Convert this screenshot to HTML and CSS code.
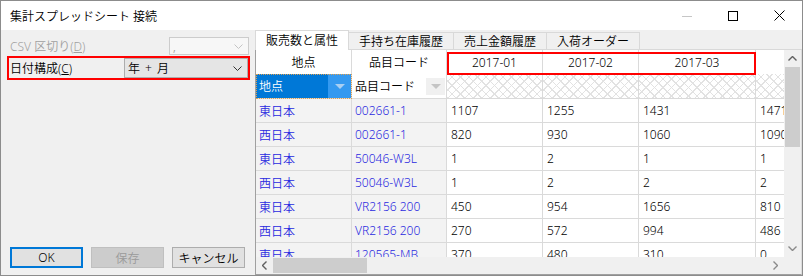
FILE: index.html
```html
<!DOCTYPE html>
<html lang="ja">
<head>
    <meta charset="UTF-8">
    <title>集計スプレッドシート 接続</title>
    <link rel="stylesheet" href="styles.css">
</head>
<body>
    <div class="window">
        <div class="titlebar">
            <span class="title">集計スプレッドシート 接続</span>
            <div class="caption-buttons">
                <span class="cap-btn"><svg width="10" height="10"><line x1="0" y1="5.5" x2="10" y2="5.5" stroke="#c6c6c6"/></svg></span>
                <span class="cap-btn"><svg width="10" height="10"><rect x="0.5" y="0.5" width="9" height="9" fill="none" stroke="#000"/></svg></span>
                <span class="cap-btn"><svg width="11" height="11"><path d="M0.5 0.5 L10.5 10.5 M10.5 0.5 L0.5 10.5" stroke="#000" stroke-width="1"/></svg></span>
            </div>
        </div>

        <div class="content">
            <div class="left">
                <div class="field-row csv-row">
                    <label class="label-disabled">CSV 区切り(<u>D</u>)</label>
                    <div class="combo combo-disabled">
                        <span>,</span>
                        <svg width="9" height="5"><polyline points="0.5,0.5 4.5,4.5 8.5,0.5" fill="none" stroke="#c4c4c4"/></svg>
                    </div>
                </div>
                <div class="field-row date-row">
                    <label class="date-label">日付構成(<u>C</u>)</label>
                    <div class="combo">
                        <span>年 + 月</span>
                        <svg width="9" height="5"><polyline points="0.5,0.5 4.5,4.5 8.5,0.5" fill="none" stroke="#333"/></svg>
                    </div>
                </div>
                <div class="buttons">
                    <button class="btn btn-default">OK</button>
                    <button class="btn" disabled>保存</button>
                    <button class="btn">キャンセル</button>
                </div>
            </div>

            <div class="right">
                <div class="tabs">
                    <span class="tab active">販売数と属性</span>
                    <span class="tab">手持ち在庫履歴</span>
                    <span class="tab">売上金額履歴</span>
                    <span class="tab">入荷オーダー</span>
                </div>
                <div class="grid-box">
                    <div class="grid-main">
                        <div class="cells">
                            <div class="row head-row">
                                <div class="cell">地点</div>
                                <div class="cell">品目コード</div>
                                <div class="cell">2017-01</div>
                                <div class="cell">2017-02</div>
                                <div class="cell">2017-03</div>
                                <div class="cell"></div>
                            </div>
                            <div class="row filter-row">
                                <div class="cell filter-active">
                                    <span class="filter-text">地点</span>
                                    <span class="filter-arrow"><i class="tri tri-blue"></i></span>
                                </div>
                                <div class="cell filter-plain">
                                    <span class="filter-text">品目コード</span>
                                    <span class="filter-arrow-box"><i class="tri"></i></span>
                                </div>
                                <div class="cell hatch"></div>
                                <div class="cell hatch"></div>
                                <div class="cell hatch"></div>
                                <div class="cell hatch"></div>
                            </div>
                            <div class="row data-row">
                                <div class="cell key">東日本</div><div class="cell key">002661-1</div>
                                <div class="cell">1107</div><div class="cell">1255</div><div class="cell">1431</div><div class="cell">1471</div>
                            </div>
                            <div class="row data-row">
                                <div class="cell key">西日本</div><div class="cell key">002661-1</div>
                                <div class="cell">820</div><div class="cell">930</div><div class="cell">1060</div><div class="cell">1090</div>
                            </div>
                            <div class="row data-row">
                                <div class="cell key">東日本</div><div class="cell key">50046-W3L</div>
                                <div class="cell">1</div><div class="cell">2</div><div class="cell">1</div><div class="cell">1</div>
                            </div>
                            <div class="row data-row">
                                <div class="cell key">西日本</div><div class="cell key">50046-W3L</div>
                                <div class="cell">1</div><div class="cell">2</div><div class="cell">2</div><div class="cell">2</div>
                            </div>
                            <div class="row data-row">
                                <div class="cell key">東日本</div><div class="cell key">VR2156 200</div>
                                <div class="cell">450</div><div class="cell">954</div><div class="cell">1656</div><div class="cell">810</div>
                            </div>
                            <div class="row data-row">
                                <div class="cell key">西日本</div><div class="cell key">VR2156 200</div>
                                <div class="cell">270</div><div class="cell">572</div><div class="cell">994</div><div class="cell">486</div>
                            </div>
                            <div class="row data-row">
                                <div class="cell key">東日本</div><div class="cell key">120565-MB</div>
                                <div class="cell">370</div><div class="cell">480</div><div class="cell">310</div><div class="cell">0</div>
                            </div>
                            <div class="highlight"></div>
                        </div>
                        <div class="vscroll">
                            <span class="sb-btn"><svg width="9" height="5"><polyline points="0.5,4.5 4.5,0.5 8.5,4.5" fill="none" stroke="#606060" stroke-width="1.4"/></svg></span>
                            <div class="vtrack"><div class="vthumb"></div></div>
                            <span class="sb-btn"><svg width="9" height="5"><polyline points="0.5,0.5 4.5,4.5 8.5,0.5" fill="none" stroke="#8a8a8a" stroke-width="1.4"/></svg></span>
                        </div>
                    </div>
                    <div class="hscroll-row">
                        <div class="hscroll">
                            <span class="sb-btn"><svg width="5" height="9"><polyline points="4.5,0.5 0.5,4.5 4.5,8.5" fill="none" stroke="#606060" stroke-width="1.4"/></svg></span>
                            <div class="htrack"><div class="hthumb"></div></div>
                            <span class="sb-btn"><svg width="5" height="9"><polyline points="0.5,0.5 4.5,4.5 0.5,8.5" fill="none" stroke="#8a8a8a" stroke-width="1.4"/></svg></span>
                        </div>
                        <div class="corner"></div>
                    </div>
                </div>
            </div>
        </div>
    </div>
</body>
</html>
```

FILE: styles.css
```css
* {
    box-sizing: border-box;
}
body {
    margin: 0;
    padding: 0;
    font-family: "Noto Sans", "Noto Sans CJK JP", sans-serif;
    font-size: 12px;
    font-weight: 350;
    color: #000;
    background-color: #ffffff;
}
.window {
    width: 803px;
    height: 276px;
    border: 1px solid #8c8c8c;
    display: flex;
    flex-direction: column;
    overflow: hidden;
}
.titlebar {
    height: 29px;
    flex: none;
    display: flex;
    align-items: center;
    justify-content: space-between;
    background: #fff;
    padding-left: 9px;
}
.title {
    font-size: 12px;
}
.caption-buttons {
    display: flex;
    height: 100%;
}
.cap-btn {
    width: 46px;
    display: flex;
    align-items: center;
    justify-content: center;
}
.content {
    flex: 1;
    display: flex;
    background-color: #f0f0f0;
    min-height: 0;
}

/* left panel */
.left {
    width: 254px;
    flex: none;
    display: flex;
    flex-direction: column;
    padding: 7px 5px 7px 6px;
}
.field-row {
    display: flex;
    align-items: center;
}
.csv-row {
    height: 18px;
    padding: 0 1px 0 3px;
    justify-content: space-between;
}
.label-disabled {
    color: #a0a0a0;
}
.date-row {
    margin-top: 1px;
    height: 24px;
    border: 2px solid #f00;
    padding-left: 1px;
}
.date-label {
    width: 114px;
    flex: none;
}
.combo {
    flex: 1;
    height: 20px;
    display: flex;
    align-items: center;
    justify-content: space-between;
    padding: 0 5px 0 3px;
    border: 1px solid #adadad;
    background-color: #e5e5e5;
    word-spacing: 2px;
}
.combo-disabled {
    flex: none;
    width: 80px;
    height: 18px;
    border-color: #cccccc;
    background-color: #f7f7f7;
    color: #8c8c8c;
}
.buttons {
    margin-top: auto;
    display: flex;
    gap: 8px;
    padding-left: 3px;
}
.btn {
    width: 73px;
    height: 21px;
    padding: 0;
    font-family: inherit;
    font-size: 12px;
    font-weight: 350;
    color: #000;
    background-color: #e1e1e1;
    border: 1px solid #adadad;
}
.btn-default {
    border: 2px solid #0078d7;
}
.btn:disabled {
    background-color: #cccccc;
    border-color: #bfbfbf;
    color: #9a9a9a;
}

/* right panel */
.right {
    flex: 1;
    display: flex;
    flex-direction: column;
    min-width: 0;
}
.tabs {
    height: 20px;
    flex: none;
    display: flex;
    align-items: flex-end;
    border-bottom: 1px solid #d9d9d9;
}
.tab {
    height: 17px;
    padding: 0 10px;
    display: flex;
    align-items: center;
    border: 1px solid #d9d9d9;
    border-bottom: none;
    border-left: none;
    white-space: nowrap;
}
.tab.active {
    height: 20px;
    margin-bottom: -1px;
    background: #fff;
    border-left: 1px solid #d9d9d9;
    padding-bottom: 1px;
}
.grid-box {
    flex: 1;
    display: flex;
    flex-direction: column;
    border-left: 1px solid #a0a0a0;
    border-right: 1px solid #dcdcdc;
    border-bottom: 1px solid #a0a0a0;
    min-height: 0;
}
.grid-main {
    flex: 1;
    display: flex;
    min-height: 0;
}
.cells {
    flex: 1;
    position: relative;
    overflow: hidden;
    background: #fff;
}
.row {
    display: grid;
    grid-template-columns: 96px 95px 96px 96px 117px 96px;
    height: 24px;
}
.cell {
    display: flex;
    align-items: center;
    padding-left: 3px;
    border-right: 1px solid #dadada;
    white-space: nowrap;
    overflow: hidden;
}
.head-row .cell {
    justify-content: center;
    padding-left: 0;
}
.filter-row {
    height: 25px;
}
.filter-row .cell {
    border-bottom: 1px solid #dadada;
}
.filter-active {
    padding: 0;
    background-color: #0078d7;
    color: #fff;
    outline: 1px dotted #e0a050;
    outline-offset: -1px;
}
.filter-text {
    flex: 1;
    padding-left: 3px;
}
.filter-arrow {
    width: 23px;
    height: 100%;
    display: flex;
    align-items: center;
    justify-content: center;
    background-color: #3499f0;
}
.filter-plain {
    padding: 0;
}
.filter-arrow-box {
    width: 19px;
    height: 17px;
    margin-right: 1px;
    display: flex;
    align-items: center;
    justify-content: center;
    background-color: #f0f0f0;
}
.tri {
    width: 0;
    height: 0;
    border-left: 5px solid transparent;
    border-right: 5px solid transparent;
    border-top: 5px solid #c4c4c4;
}
.tri-blue {
    border-top-color: #a9cff2;
}
.hatch {
    background-color: #fff;
    background-image:
        repeating-linear-gradient(45deg, #e2e2e2 0 1px, transparent 1px 6px),
        repeating-linear-gradient(-45deg, #e2e2e2 0 1px, transparent 1px 6px);
}
.data-row .cell {
    border-bottom: 1px solid #dadada;
    padding-left: 4px;
}
.data-row .cell.key {
    background-color: #f3f3f3;
    color: #2a2ae0;
    padding-left: 3px;
}
.highlight {
    position: absolute;
    left: 191px;
    top: 2px;
    width: 309px;
    height: 23px;
    border: 2px solid #f00;
}

/* scrollbars */
.vscroll {
    width: 17px;
    flex: none;
    display: flex;
    flex-direction: column;
    background-color: #f0f0f0;
}
.sb-btn {
    width: 17px;
    height: 17px;
    flex: none;
    display: flex;
    align-items: center;
    justify-content: center;
}
.vtrack {
    flex: 1;
    padding: 0 1px;
}
.vthumb {
    height: 80px;
    background-color: #cdcdcd;
}
.hscroll-row {
    height: 17px;
    flex: none;
    display: flex;
    background-color: #f0f0f0;
}
.hscroll {
    flex: 1;
    display: flex;
}
.htrack {
    flex: 1;
    padding: 1px 0;
}
.hthumb {
    width: 94px;
    height: 100%;
    background-color: #cdcdcd;
}
.corner {
    width: 17px;
}
```
